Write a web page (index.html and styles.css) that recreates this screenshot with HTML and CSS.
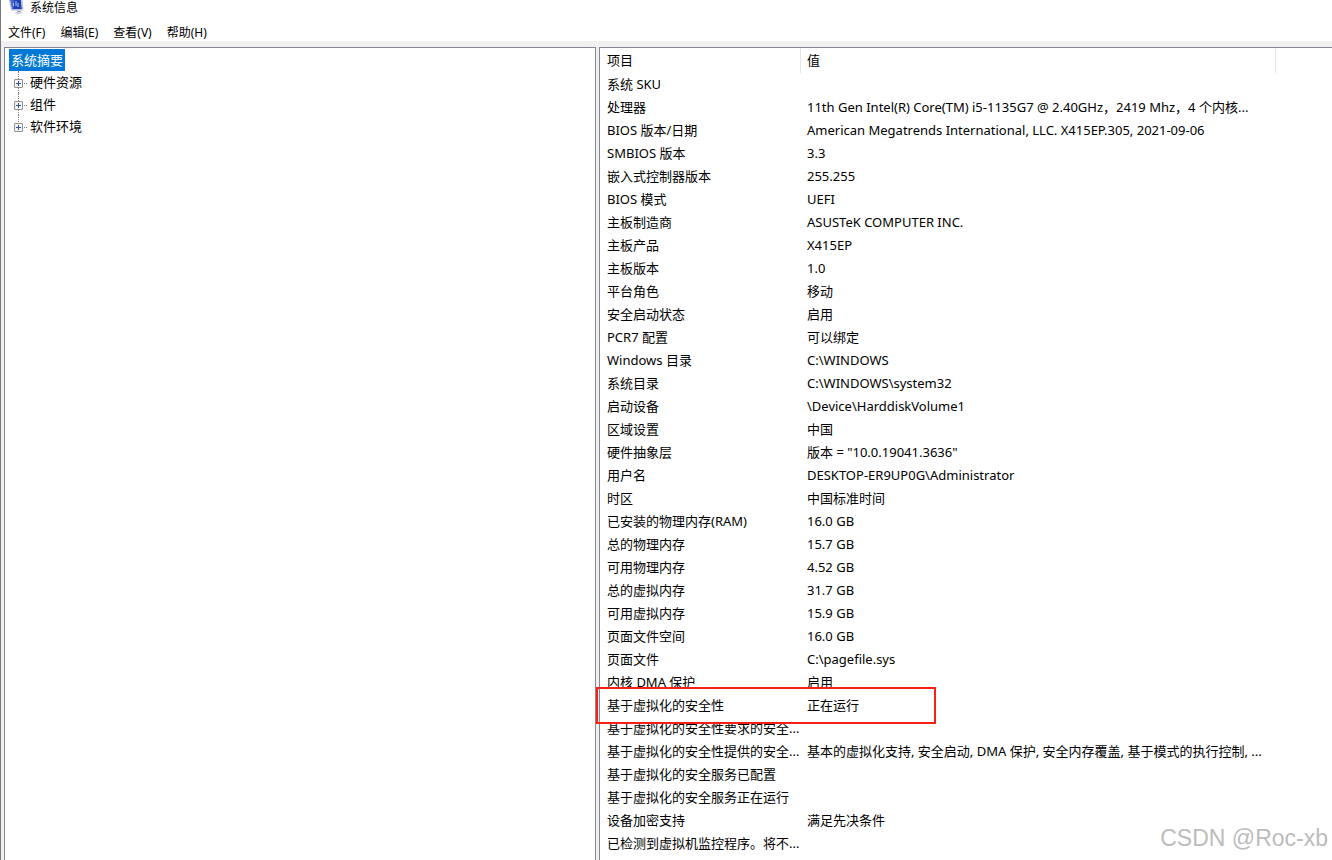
FILE: index.html
```html
<!DOCTYPE html>
<html lang="zh-CN">
<head>
<meta charset="utf-8">
<title>系统信息</title>
<link rel="stylesheet" href="styles.css">
</head>
<body>
<div class="window">
  <header class="titlebar">
    <svg class="app-icon" viewBox="0 0 16 16" aria-hidden="true">
      <path d="M0 0 L2 0 L4 10 L2 10 Z" fill="#b3bdd8"/>
      <path d="M1.500 0 L12 0 L13 9.500 L3.500 9.500 Z" fill="#2140b8"/>
      <path d="M1.500 0 L5 0 L4.500 9.500 L3.500 9.500 Z" fill="#4668d4"/>
      <path d="M4.500 3 V6 M7 1 V6 M9 3 V7" stroke="#b4c8f8" fill="none"/>
      <path d="M12 0 L13.500 0 L14.500 9.500 L13 9.500 Z" fill="#b9bfce"/>
      <path d="M2.500 9.500 L14.500 9.500 L14 11 L3 11 Z" fill="#d5d9e4"/>
      <path d="M8 11 L12 11 L12 12.500 L8 12.500 Z" fill="#9da2ae"/>
      <path d="M5 12.500 L12 12 L14 13 L8 14.500 Z" fill="#cfd2d9"/>
    </svg>
    <span>系统信息</span>
  </header>
  <nav class="menubar">
    <button type="button">文件(F)</button>
    <button type="button">编辑(E)</button>
    <button type="button">查看(V)</button>
    <button type="button">帮助(H)</button>
  </nav>
  <main class="panes">
    <section class="pane tree-pane">
      <button type="button" class="tree-root">系统摘要</button>
      <ul class="tree">
        <li><button type="button" class="expander" aria-label="展开 硬件资源"></button><span>硬件资源</span></li>
        <li><button type="button" class="expander" aria-label="展开 组件"></button><span>组件</span></li>
        <li><button type="button" class="expander" aria-label="展开 软件环境"></button><span>软件环境</span></li>
      </ul>
    </section>
    <section class="pane detail-pane">
      <table class="details">
        <colgroup><col class="col-name"><col class="col-value"><col></colgroup>
        <thead><tr><th>项目</th><th>值</th><th></th></tr></thead>
        <tbody>
          <tr><td>系统 SKU</td><td></td></tr>
          <tr><td>处理器</td><td>11th Gen Intel(R) Core(TM) i5-1135G7 @ 2.40GHz，2419 Mhz，4 个内核...</td></tr>
          <tr><td>BIOS 版本/日期</td><td>American Megatrends International, LLC. X415EP.305, 2021-09-06</td></tr>
          <tr><td>SMBIOS 版本</td><td>3.3</td></tr>
          <tr><td>嵌入式控制器版本</td><td>255.255</td></tr>
          <tr><td>BIOS 模式</td><td>UEFI</td></tr>
          <tr><td>主板制造商</td><td>ASUSTeK COMPUTER INC.</td></tr>
          <tr><td>主板产品</td><td>X415EP</td></tr>
          <tr><td>主板版本</td><td>1.0</td></tr>
          <tr><td>平台角色</td><td>移动</td></tr>
          <tr><td>安全启动状态</td><td>启用</td></tr>
          <tr><td>PCR7 配置</td><td>可以绑定</td></tr>
          <tr><td>Windows 目录</td><td>C:\WINDOWS</td></tr>
          <tr><td>系统目录</td><td>C:\WINDOWS\system32</td></tr>
          <tr><td>启动设备</td><td>\Device\HarddiskVolume1</td></tr>
          <tr><td>区域设置</td><td>中国</td></tr>
          <tr><td>硬件抽象层</td><td>版本 = "10.0.19041.3636"</td></tr>
          <tr><td>用户名</td><td>DESKTOP-ER9UP0G\Administrator</td></tr>
          <tr><td>时区</td><td>中国标准时间</td></tr>
          <tr><td>已安装的物理内存(RAM)</td><td>16.0 GB</td></tr>
          <tr><td>总的物理内存</td><td>15.7 GB</td></tr>
          <tr><td>可用物理内存</td><td>4.52 GB</td></tr>
          <tr><td>总的虚拟内存</td><td>31.7 GB</td></tr>
          <tr><td>可用虚拟内存</td><td>15.9 GB</td></tr>
          <tr><td>页面文件空间</td><td>16.0 GB</td></tr>
          <tr><td>页面文件</td><td>C:\pagefile.sys</td></tr>
          <tr><td>内核 DMA 保护</td><td>启用</td></tr>
          <tr class="marked"><td>基于虚拟化的安全性</td><td>正在运行</td></tr>
          <tr><td>基于虚拟化的安全性要求的安全...</td><td></td></tr>
          <tr><td>基于虚拟化的安全性提供的安全...</td><td>基本的虚拟化支持, 安全启动, DMA 保护, 安全内存覆盖, 基于模式的执行控制, ...</td></tr>
          <tr><td>基于虚拟化的安全服务已配置</td><td></td></tr>
          <tr><td>基于虚拟化的安全服务正在运行</td><td></td></tr>
          <tr><td>设备加密支持</td><td>满足先决条件</td></tr>
          <tr><td>已检测到虚拟机监控程序。将不...</td><td></td></tr>
        </tbody>
      </table>
    </section>
  </main>
</div>
<div class="watermark">CSDN @Roc-xb</div>
</body>
</html>
```
FILE: styles.css
```css
*, *::before, *::after { box-sizing: border-box; }
body {
  margin: 0;
  height: 100vh;
  overflow: hidden;
  background: #fff;
  color: #000;
  font: 13px/21px "Noto Sans", "Noto Sans CJK SC", sans-serif;
}
button {
  margin: 0;
  padding: 0;
  border: 0;
  background: none;
  color: inherit;
  font: inherit;
}
.window {
  display: flex;
  flex-direction: column;
  height: 100%;
  border-left: 1px solid #77777c;
}
.titlebar {
  display: flex;
  align-items: center;
  gap: 5px;
  height: 16px;
  padding-left: 8px;
  font-size: 12px;
  line-height: 20px;
}
.titlebar span { padding-bottom: 1px; }
.app-icon { width: 16px; height: 16px; }
.menubar {
  display: flex;
  gap: 15px;
  height: 25px;
  align-items: center;
  padding: 8px 0 0 7px;
  font-size: 12px;
}
.panes {
  flex: 1;
  min-height: 0;
  display: grid;
  grid-template-columns: 592px 1fr;
  gap: 3px;
  padding: 6px 0 0 3px;
  background: #f0f0f0;
}
.pane {
  min-width: 0;
  overflow: hidden;
  background: #fff;
  border: 1px solid #828790;
  border-bottom: 0;
}
.detail-pane { border-right: 0; overflow: visible; }
.tree-pane { padding: 1px 4px; }
.tree-root {
  display: block;
  height: 22px;
  padding: 0 2px;
  background: #0078d7;
  color: #fff;
}
.tree {
  margin: 0;
  padding: 0 0 0 5px;
  list-style: none;
}
.tree li {
  position: relative;
  display: flex;
  align-items: center;
  gap: 7px;
  height: 22px;
}
.tree li::before {
  content: "";
  position: absolute;
  left: 4px;
  top: 0;
  height: 22px;
  border-left: 1px dotted #808080;
}
.tree li:last-child::before { height: 11px; }
.tree li::after {
  content: "";
  position: absolute;
  left: 10px;
  top: 12px;
  width: 3px;
  border-top: 1px dotted #808080;
}
.expander {
  position: relative;
  z-index: 1;
  width: 9px;
  height: 9px;
  margin-top: 3px;
  border: 1px solid #919191;
  border-radius: 1px;
  background:
    linear-gradient(#34529c, #34529c) center / 5px 1px no-repeat,
    linear-gradient(#34529c, #34529c) center / 1px 5px no-repeat,
    #f4f4f4;
}
.details {
  width: 100%;
  table-layout: fixed;
  border-collapse: collapse;
}
.col-name { width: 201px; }
.col-value { width: 475px; }
.details th, .details td {
  height: 23px;
  padding: 0 0 0 7px;
  text-align: left;
  font-weight: normal;
  white-space: nowrap;
}
.details th + th, .details td + td { padding-left: 6px; }
.details th {
  height: 25px;
  padding-bottom: 1px;
  background: linear-gradient(#e5e5e5, #e5e5e5) right center / 1px 100% no-repeat;
}
.details th:last-child { background: none; }
.marked { position: relative; }
.marked td:first-child::before {
  content: "";
  position: absolute;
  left: -4px;
  top: -7px;
  width: 340px;
  height: 37px;
  border: 2px solid #fb2015;
}
.watermark {
  position: absolute;
  right: 4px;
  bottom: 8px;
  color: #bcbcbc;
  font: 23px/28px "Liberation Sans", sans-serif;
}
```
